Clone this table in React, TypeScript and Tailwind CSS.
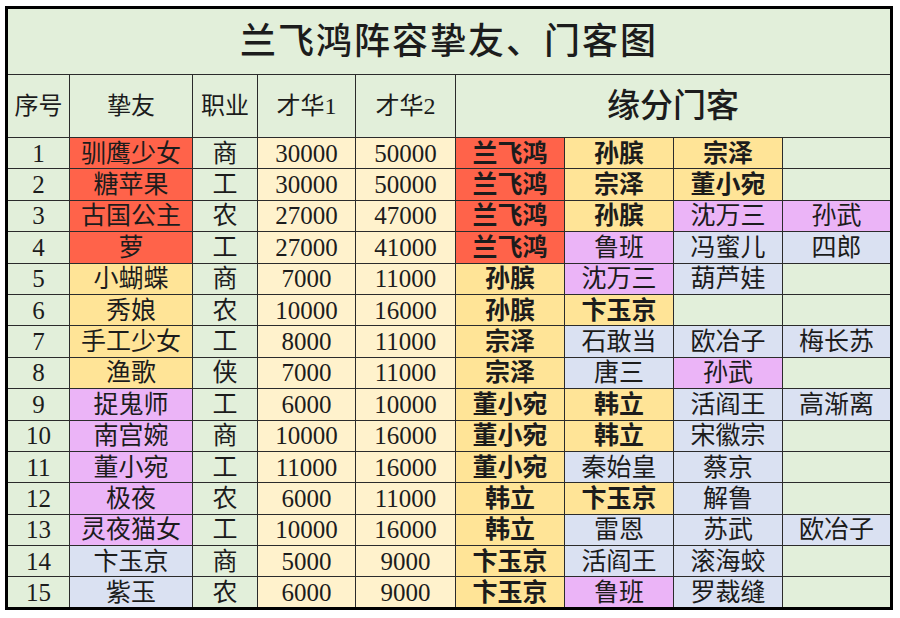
type Tone = 'R' | 'O' | 'P' | 'B' | 'G'

interface Row {
  no: number
  name: string
  tone: Tone
  job: string
  t1: number
  t2: number
  fate: [string, Tone][]
}

const TONE_BG: Record<Tone, string> = {
  R: 'bg-[#ff634a]',
  O: 'bg-[#ffe497]',
  P: 'bg-[#ebb4f7]',
  B: 'bg-[#dae1f2]',
  G: 'bg-[#e2efda]',
}

const ROWS: Row[] = [
  { no: 1, name: '驯鹰少女', tone: 'R', job: '商', t1: 30000, t2: 50000, fate: [['兰飞鸿', 'R'], ['孙膑', 'O'], ['宗泽', 'O'], ['', 'G']] },
  { no: 2, name: '糖苹果', tone: 'R', job: '工', t1: 30000, t2: 50000, fate: [['兰飞鸿', 'R'], ['宗泽', 'O'], ['董小宛', 'O'], ['', 'G']] },
  { no: 3, name: '古国公主', tone: 'R', job: '农', t1: 27000, t2: 47000, fate: [['兰飞鸿', 'R'], ['孙膑', 'O'], ['沈万三', 'P'], ['孙武', 'P']] },
  { no: 4, name: '萝', tone: 'R', job: '工', t1: 27000, t2: 41000, fate: [['兰飞鸿', 'R'], ['鲁班', 'P'], ['冯蜜儿', 'B'], ['四郎', 'B']] },
  { no: 5, name: '小蝴蝶', tone: 'O', job: '商', t1: 7000, t2: 11000, fate: [['孙膑', 'O'], ['沈万三', 'P'], ['葫芦娃', 'B'], ['', 'G']] },
  { no: 6, name: '秀娘', tone: 'O', job: '农', t1: 10000, t2: 16000, fate: [['孙膑', 'O'], ['卞玉京', 'O'], ['', 'G'], ['', 'G']] },
  { no: 7, name: '手工少女', tone: 'O', job: '工', t1: 8000, t2: 11000, fate: [['宗泽', 'O'], ['石敢当', 'B'], ['欧冶子', 'B'], ['梅长苏', 'B']] },
  { no: 8, name: '渔歌', tone: 'O', job: '侠', t1: 7000, t2: 11000, fate: [['宗泽', 'O'], ['唐三', 'B'], ['孙武', 'P'], ['', 'G']] },
  { no: 9, name: '捉鬼师', tone: 'P', job: '工', t1: 6000, t2: 10000, fate: [['董小宛', 'O'], ['韩立', 'O'], ['活阎王', 'B'], ['高渐离', 'B']] },
  { no: 10, name: '南宫婉', tone: 'P', job: '商', t1: 10000, t2: 16000, fate: [['董小宛', 'O'], ['韩立', 'O'], ['宋徽宗', 'B'], ['', 'G']] },
  { no: 11, name: '董小宛', tone: 'P', job: '工', t1: 11000, t2: 16000, fate: [['董小宛', 'O'], ['秦始皇', 'B'], ['蔡京', 'B'], ['', 'G']] },
  { no: 12, name: '极夜', tone: 'P', job: '农', t1: 6000, t2: 11000, fate: [['韩立', 'O'], ['卞玉京', 'O'], ['解鲁', 'B'], ['', 'G']] },
  { no: 13, name: '灵夜猫女', tone: 'P', job: '工', t1: 10000, t2: 16000, fate: [['韩立', 'O'], ['雷恩', 'B'], ['苏武', 'B'], ['欧冶子', 'B']] },
  { no: 14, name: '卞玉京', tone: 'B', job: '商', t1: 5000, t2: 9000, fate: [['卞玉京', 'O'], ['活阎王', 'B'], ['滚海蛟', 'B'], ['', 'G']] },
  { no: 15, name: '紫玉', tone: 'B', job: '农', t1: 6000, t2: 9000, fate: [['卞玉京', 'O'], ['鲁班', 'P'], ['罗裁缝', 'B'], ['', 'G']] },
]

const cell = 'border border-[#2b2b2b] p-0 text-center align-middle leading-none'

export default function App() {
  return (
    <div
      className="min-h-[618px] w-[900px] bg-white pl-[5px] pt-[6px] text-[#1c1c1c]"
      style={{ fontFamily: "'Liberation Serif', 'Noto Sans CJK SC', serif" }}
    >
      <table className="table-fixed border-collapse border-[3px] border-black">
        <colgroup>
          <col className="w-[63px]" />
          <col className="w-[123px]" />
          <col className="w-[65px]" />
          <col className="w-[98px]" />
          <col className="w-[100px]" />
          <col className="w-[109px]" />
          <col className="w-[109px]" />
          <col className="w-[109px]" />
          <col className="w-[109px]" />
        </colgroup>
        <tbody>
          <tr className="h-[67px]">
            <td colSpan={9} className={`${cell} bg-[#e2efda] text-[36px] font-medium tracking-[2px]`}>
              兰飞鸿阵容挚友、门客图
            </td>
          </tr>
          <tr className="h-[63px] bg-[#e2efda] text-[24px]">
            <td className={cell}>序号</td>
            <td className={cell}>挚友</td>
            <td className={cell}>职业</td>
            <td className={cell}>才华1</td>
            <td className={cell}>才华2</td>
            <td colSpan={4} className={`${cell} text-[33px] font-medium`}>缘分门客</td>
          </tr>
          {ROWS.map((row) => (
            <tr key={row.no} className="h-[31.4px] text-[25px]">
              <td className={`${cell} bg-[#e2efda]`}>{row.no}</td>
              <td className={`${cell} ${TONE_BG[row.tone]}`}>{row.name}</td>
              <td className={`${cell} bg-[#e2efda]`}>{row.job}</td>
              <td className={`${cell} bg-[#fff2cc]`}>{row.t1}</td>
              <td className={`${cell} bg-[#fff2cc]`}>{row.t2}</td>
              {row.fate.map(([name, tone], i) => (
                <td
                  key={i}
                  className={`${cell} ${TONE_BG[tone]} ${tone === 'R' || tone === 'O' ? 'font-bold' : ''}`}
                >
                  {name}
                </td>
              ))}
            </tr>
          ))}
        </tbody>
      </table>
    </div>
  )
}
